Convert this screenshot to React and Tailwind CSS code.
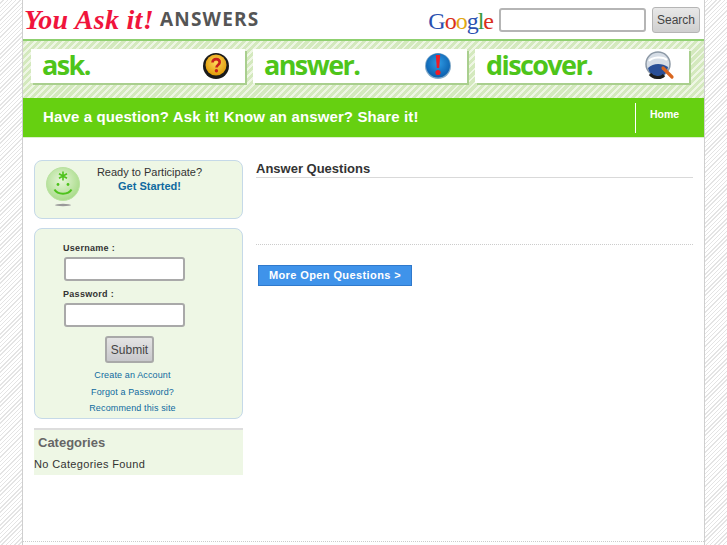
import React from "react";

const sans = "font-['Liberation_Sans',Arial,sans-serif]";

function AskIcon() {
  return (
    <svg width="32" height="32" viewBox="0 0 32 32">
      <defs>
        <radialGradient id="ask" cx="50%" cy="40%" r="60%">
          <stop offset="0%" stopColor="#ffd75a" />
          <stop offset="100%" stopColor="#e09a08" />
        </radialGradient>
      </defs>
      <circle cx="16" cy="16" r="13" fill="#1a1a1a" />
      <circle cx="16" cy="15" r="10.5" fill="url(#ask)" />
      <path d="M12.5 12.5c0-2.2 1.6-3.4 3.6-3.4s3.6 1.2 3.6 3.2c0 2.8-3.2 2.6-3.2 5.2" fill="none" stroke="#c8201c" strokeWidth="2.6" />
      <circle cx="16.4" cy="20.8" r="1.7" fill="#c8201c" />
    </svg>
  );
}

function AnswerIcon() {
  return (
    <svg width="32" height="32" viewBox="0 0 32 32">
      <defs>
        <radialGradient id="ans" cx="50%" cy="40%" r="60%">
          <stop offset="0%" stopColor="#2f9be4" />
          <stop offset="100%" stopColor="#0b5fae" />
        </radialGradient>
      </defs>
      <circle cx="16" cy="16" r="13" fill="#7fa8c8" />
      <circle cx="16" cy="15.5" r="12" fill="url(#ans)" />
      <path d="M13.8 5h4.4l-1 13h-2.4z" fill="#ee1c25" />
      <circle cx="16" cy="22.5" r="2.6" fill="#ee1c25" />
    </svg>
  );
}

function DiscoverIcon() {
  return (
    <svg width="32" height="32" viewBox="0 0 32 32">
      <circle cx="14" cy="14" r="12" fill="#d6dde6" stroke="#8d99a6" strokeWidth="1.5" />
      <path d="M5 11c3-4 14-5 18-1" fill="none" stroke="#ffffff" strokeWidth="2" />
      <path d="M4 18c5-5 14-5 20-1c-1 7-6 10-10 10c-5 0-9-4-10-9z" fill="#2a4f96" />
      <path d="M6 24c3 4 11 5 14 1" fill="none" stroke="#1d1d1d" strokeWidth="3" />
      <path d="M19 18l9 9" stroke="#d9661f" strokeWidth="3.2" strokeLinecap="round" />
    </svg>
  );
}

function Smiley() {
  return (
    <svg width="40" height="50" viewBox="0 0 40 50">
      <defs>
        <radialGradient id="sm" cx="45%" cy="40%" r="60%">
          <stop offset="0%" stopColor="#e6f5d8" />
          <stop offset="100%" stopColor="#a9dc8a" />
        </radialGradient>
      </defs>
      <circle cx="20" cy="20" r="16.5" fill="url(#sm)" stroke="#b9e2a0" />
      <path d="M20 7.5v9M16 9.8l8 4.4M24 9.8l-8 4.4" stroke="#4ec31c" strokeWidth="1.6" />
      <circle cx="15" cy="20.5" r="1.4" fill="#4ec31c" />
      <circle cx="25" cy="20.5" r="1.4" fill="#4ec31c" />
      <path d="M11.5 25.5c3 5.5 14 5.5 17 0" fill="none" stroke="#4ec31c" strokeWidth="2" />
      <ellipse cx="20" cy="41" rx="8" ry="1.2" fill="#9a9a9a" />
    </svg>
  );
}

function NavCard({ label, icon }) {
  return (
    <div className="w-[214px] h-[34px] bg-white flex items-center justify-between pl-[11px] pr-[13px] shadow-[2px_2px_0_#a9cf8e]">
      <span className="font-['Open_Sans',sans-serif] font-bold text-[27px] leading-none tracking-[-1.6px] text-[#4ec51a] -mt-[3px]">{label}</span>
      {icon}
    </div>
  );
}

function TextInput({ w, h }) {
  return <input className={`${w} ${h} bg-white border-2 border-[#a9a9a9] rounded-[3px] block`} />;
}

export default function App() {
  return (
    <div className={`${sans} h-[545px] overflow-hidden flex justify-center bg-[repeating-linear-gradient(135deg,#ffffff_0px,#ffffff_2px,#e4e4e4_2px,#e4e4e4_3px)]`}>
      <div className="w-[683px] h-full bg-white border-x border-[#cfcfcf] flex flex-col">
        <header className="h-[39px] flex items-center justify-between pr-[4px] shrink-0">
          <div className="flex items-center pl-[1px]">
            <span className="font-['Liberation_Serif',serif] italic font-bold text-[28px] leading-none text-[#f0143c] w-[136px] whitespace-nowrap tracking-[0.3px]">You Ask it!</span>
            <span className="font-['Open_Sans',sans-serif] font-bold text-[19px] leading-none text-[#555555] tracking-[1.2px]">ANSWERS</span>
          </div>
          <div className="flex items-center">
            <span className="font-['Liberation_Serif',serif] text-[24px] leading-none tracking-[-1px] mr-[6px] mt-[3px]">
              <span className="text-[#2a50b0]">G</span>
              <span className="text-[#d8301c]">o</span>
              <span className="text-[#e2a812]">o</span>
              <span className="text-[#2a50b0]">g</span>
              <span className="text-[#3a9a3a]">l</span>
              <span className="text-[#d8301c]">e</span>
            </span>
            <input className="w-[147px] h-[24px] bg-white border-2 border-[#b5b5b5] rounded-[3px] mr-[6px]" />
            <button className="w-[48px] h-[26px] rounded-[3px] border border-[#b5b5b5] bg-[linear-gradient(#e8e8e8,#cfcfcf)] text-[12px] text-[#444444]">Search</button>
          </div>
        </header>

        <nav className="h-[59px] shrink-0 border-t-2 border-[#8fd070] flex gap-[8px] pl-[8px] pt-[8px] bg-[repeating-linear-gradient(135deg,#d4e9be_0px,#d4e9be_3px,#eef6e4_3px,#eef6e4_5px)]">
          <NavCard label="ask." icon={<AskIcon />} />
          <NavCard label="answer." icon={<AnswerIcon />} />
          <NavCard label="discover." icon={<DiscoverIcon />} />
        </nav>

        <div className="h-[39px] shrink-0 bg-[#66d011] flex items-center text-white font-bold">
          <div className="pl-[20px] w-[612px] text-[15px] tracking-[0.12px] -mt-[1px]">Have a question? Ask it! Know an answer? Share it!</div>
          <div className="h-[30px] border-l border-white pl-[14px] text-[10.5px] pt-[5px] leading-[13px]">Home</div>
        </div>

        <main className="flex-1 flex pl-[11px] pr-[11px] pt-[22px] gap-[13px] relative border-t border-[#dcefcd]">
          <aside className="w-[209px] shrink-0 flex flex-col">
            <div className="h-[59px] bg-[#eef7e5] border border-[#c5d9e8] rounded-[8px] flex pl-[8px] pt-[3px]">
              <Smiley />
              <div className="flex-1 text-center text-[11px] leading-[14px] pt-[1px] pr-[26px] text-[#333333]">
                <div className="whitespace-nowrap">Ready to Participate?</div>
                <div className="font-bold text-[#0f6aa0]">Get Started!</div>
              </div>
            </div>

            <div className="mt-[9px] h-[191px] bg-[#eef7e5] border border-[#c5d9e8] rounded-[8px] pl-[28px] pt-[13px]">
              <label className="block text-[9px] font-bold tracking-[0.3px] text-[#333333] leading-[12px]">Username :</label>
              <div className="ml-[1px] mt-[3px]"><TextInput w="w-[121px]" h="h-[24px]" /></div>
              <label className="block text-[9px] font-bold tracking-[0.3px] text-[#333333] leading-[12px] mt-[7px]">Password :</label>
              <div className="ml-[1px] mt-[3px]"><TextInput w="w-[121px]" h="h-[24px]" /></div>
              <button className="block ml-[42px] mt-[9px] w-[49px] h-[27px] rounded-[3px] border-2 border-[#a9a9a9] bg-[linear-gradient(#e4e4e4,#c8c8cc)] text-[12px] text-[#444444]">Submit</button>
              <div className="mt-[4px] text-center text-[9px] leading-[16.5px] text-[#0f6aa0] w-[139px] tracking-[0.13px]">
                <div>Create an Account</div>
                <div>Forgot a Password?</div>
                <div className="whitespace-nowrap">Recommend this site</div>
              </div>
            </div>

            <div className="mt-[9px] h-[47px] bg-[#eef7e5] border-t-2 border-[#dddddd]">
              <div className="pl-[4px] pt-[5px] text-[13px] leading-[16px] font-bold text-[#666666]">Categories</div>
              <div className="mt-[6px] text-[11px] leading-[14px] text-[#333333] tracking-[0.35px]">No Categories Found</div>
            </div>
          </aside>

          <section className="flex-1 flex flex-col">
            <h2 className="text-[13px] font-bold leading-[16px] pt-[1px] text-[#333333] border-b border-[#d9d9d9] h-[18px]">Answer Questions</h2>
            <div className="mt-[66px] border-t border-dotted border-[#cccccc]" />
            <button className="mt-[20px] ml-[2px] w-[154px] h-[21px] bg-[#3f93ea] border border-[#2f79cc] text-white text-[11px] font-bold tracking-[0.4px] flex items-center justify-center">More Open Questions &gt;</button>
          </section>

          <div className="absolute left-0 right-0 bottom-[3px] border-t border-dotted border-[#cccccc]" />
        </main>
      </div>
    </div>
  );
}
